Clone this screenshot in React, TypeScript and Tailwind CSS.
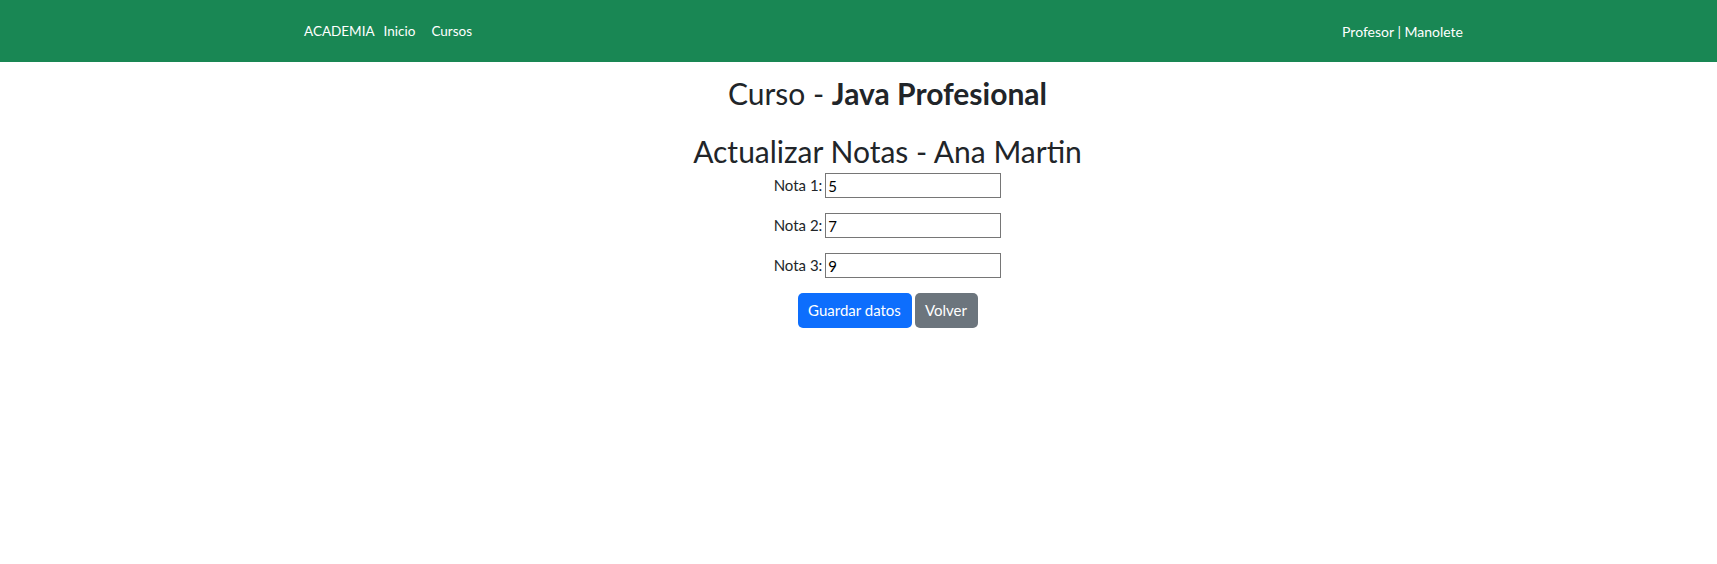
import React from 'react';

const notas = [
  { label: 'Nota 1:', value: '5' },
  { label: 'Nota 2:', value: '7' },
  { label: 'Nota 3:', value: '9' },
];

export default function App() {
  return (
    <div className="min-h-[564px] bg-white text-[#212529] font-['Segoe_UI','Lato',sans-serif]">
      {/* Navbar */}
      <nav className="h-[62px] bg-[#198754] flex items-center justify-between pl-[304px] pr-[254px] text-[13.5px] text-white">
        <div className="flex items-center">
          <span>ACADEMIA</span>
          <a className="ml-[9px]">Inicio</a>
          <a className="ml-[16px]">Cursos</a>
        </div>
        <div className="text-[14px]">Profesor | Manolete</div>
      </nav>

      <div className="flex flex-col items-center pl-[58px]">
        <h2 className="mt-[12px] text-[30px] leading-[38px] font-normal">
          Curso - <b className="font-bold">Java Profesional</b>
        </h2>
        <h2 className="mt-[20px] text-[30px] leading-[38px] font-normal">Actualizar Notas - Ana Martin</h2>

        <form className="flex flex-col items-center">
          {notas.map((n, i) => (
            <div key={n.label} className={`flex items-center ${i === 0 ? 'mt-[3px]' : 'mt-[15px]'}`}>
              <label className="text-[15px] mr-[3px]">{n.label}</label>
              <input
                type="text"
                defaultValue={n.value}
                className="w-[176px] h-[25px] border border-[#767676] px-[2px] text-[15px] text-black outline-none"
              />
            </div>
          ))}
          <div className="flex gap-[3px] mt-[15px]">
            <button type="button" className="w-[114px] h-[35px] rounded-[5px] bg-[#0d6efd] text-white text-[15px]">
              Guardar datos
            </button>
            <button type="button" className="w-[63px] h-[35px] rounded-[5px] bg-[#6c757d] text-white text-[15px]">
              Volver
            </button>
          </div>
        </form>
      </div>
    </div>
  );
}
